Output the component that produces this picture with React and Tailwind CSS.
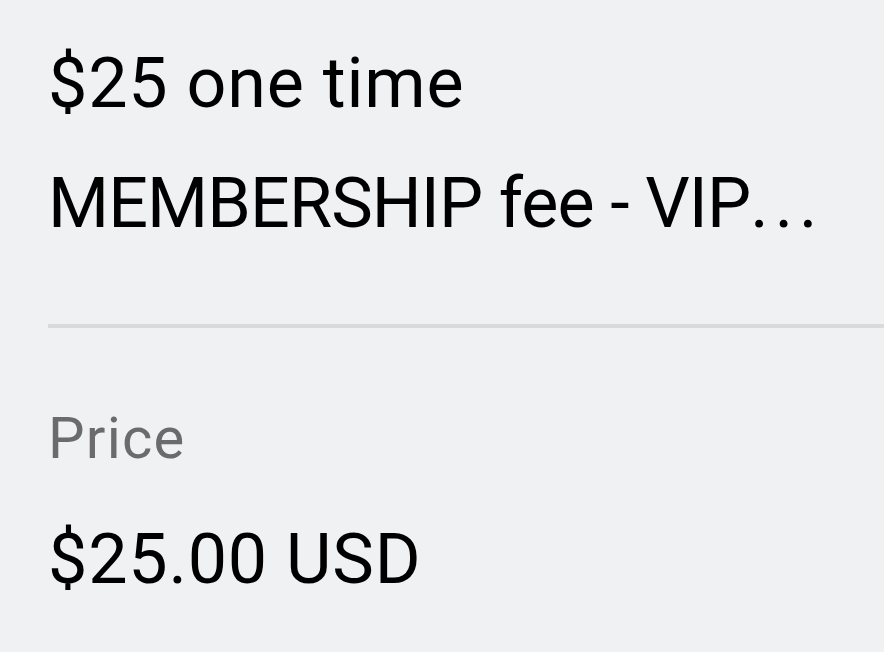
import React from "react";

const App = () => {
	return (
		<div
			className="min-h-screen w-full bg-[#f0f1f3] overflow-hidden"
			style={{ fontFamily: "Roboto, 'Noto Sans', sans-serif" }}>
			<div className="pt-[41px] pl-12 pr-12">
				<h1 className="text-[70px] leading-[84px] text-black tracking-[0.8px] whitespace-nowrap">
					$25 one time
				</h1>
				<p className="mt-[36px] text-[70px] leading-[84px] text-black tracking-[-0.9px] whitespace-nowrap">
					MEMBERSHIP fee - VIP<span className="tracking-[6px]">...</span>
				</p>
			</div>
			<div className="mt-[79px] ml-12 h-[4px] bg-[#d9dadc]" />
			<div className="pl-12 pr-12">
				<div className="mt-[76px] text-[58px] leading-[68px] text-[#6b6b6b] tracking-[1.2px]">
					Price
				</div>
				<div className="mt-[45px] text-[70px] leading-[84px] text-black tracking-[0.8px] whitespace-nowrap">
					$25.00 USD
				</div>
			</div>
		</div>
	);
};

export default App;
